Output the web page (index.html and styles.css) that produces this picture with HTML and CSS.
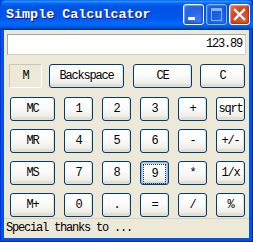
FILE: index.html
```html
<!DOCTYPE html>
<html lang="en">
<head>
    <meta charset="UTF-8">
    <title>Simple Calculcator</title>
    <link rel="stylesheet" href="styles.css">
</head>
<body>

    <div class="window">
        <div class="titlebar">
            <span class="title">Simple Calculcator</span>
            <div class="controls">
                <span class="ctrl min"><i></i></span>
                <span class="ctrl max"><i></i></span>
                <span class="ctrl close">
                    <svg width="13" height="13" viewBox="0 0 13 13"><path d="M2 2 L11 11 M11 2 L2 11" stroke="#fff" stroke-width="2.4" stroke-linecap="square"/></svg>
                </span>
            </div>
        </div>

        <div class="client">
            <div class="display">123.89</div>

            <div class="top-row">
                <span class="mem-box">M</span>
                <button class="btn backspace">Backspace</button>
                <button class="btn ce">CE</button>
                <button class="btn clear">C</button>
            </div>

            <div class="keypad">
                <button class="btn">MC</button>
                <button class="btn">1</button>
                <button class="btn">2</button>
                <button class="btn">3</button>
                <button class="btn">+</button>
                <button class="btn">sqrt</button>

                <button class="btn">MR</button>
                <button class="btn">4</button>
                <button class="btn">5</button>
                <button class="btn">6</button>
                <button class="btn">-</button>
                <button class="btn">+/-</button>

                <button class="btn">MS</button>
                <button class="btn">7</button>
                <button class="btn">8</button>
                <button class="btn focused"><span>9</span></button>
                <button class="btn">*</button>
                <button class="btn">1/x</button>

                <button class="btn">M+</button>
                <button class="btn">0</button>
                <button class="btn">.</button>
                <button class="btn">=</button>
                <button class="btn">/</button>
                <button class="btn">%</button>
            </div>
        </div>

        <div class="status">Special thanks to ...</div>
    </div>

</body>
</html>
```

FILE: styles.css
```css
body {
    margin: 0;
    width: 253px;
    height: 242px;
    overflow: hidden;
    font-family: "Liberation Mono", monospace;
}

.window {
    width: 253px;
    height: 242px;
    display: flex;
    flex-direction: column;
    background-color: #0055e5;
    box-sizing: border-box;
    border-left: 1px solid #0831d9;
    border-right: 1px solid #001ea0;
    border-bottom: 1px solid #001ea0;
}

.titlebar {
    height: 30px;
    flex-shrink: 0;
    display: flex;
    align-items: center;
    justify-content: space-between;
    padding: 0 3px 0 6px;
    background: linear-gradient(to bottom, #0058ee 0%, #3593ff 4%, #288eff 6%, #127dff 8%, #036ffc 10%, #0262ee 14%, #0057e5 20%, #0054e3 24%, #0055eb 56%, #005bf5 66%, #026afe 76%, #0062ef 86%, #0052d6 92%, #0040ab 96%, #003092 100%);
    border-radius: 7px 7px 0 0;
    margin: 0 -1px;
}

.title {
    color: white;
    font-family: "Liberation Mono", monospace;
    font-weight: bold;
    font-size: 13.4px;
    text-shadow: 1px 1px #0f1089;
    margin-top: -2px;
}

.controls {
    display: flex;
    gap: 2px;
    margin-top: -1px;
}

.ctrl {
    width: 21px;
    height: 21px;
    box-sizing: border-box;
    border: 1px solid white;
    border-radius: 3px;
    display: flex;
    align-items: center;
    justify-content: center;
    position: relative;
}

.min, .max {
    background: radial-gradient(circle at 80% 85%, #3a7cf8 0%, #2663e0 60%, #2f6de8 100%);
    box-shadow: inset -1px -1px 2px #1845c0, inset 1px 1px 1px #6fa0ff;
}

.min i {
    position: absolute;
    left: 4px;
    bottom: 4px;
    width: 7px;
    height: 3px;
    background-color: white;
}

.max {
    opacity: 0.55;
}

.max i {
    width: 9px;
    height: 9px;
    border: 1px solid white;
    border-top-width: 3px;
}

.close {
    background: radial-gradient(circle at 80% 85%, #e0603a 0%, #d4451f 55%, #e0704c 100%);
    box-shadow: inset -1px -1px 2px #a82e10, inset 1px 1px 1px #f49a7c;
}

.client {
    flex: 1;
    margin: 0 3px;
    background-color: #ece9d8;
    display: flex;
    flex-direction: column;
}

.display {
    margin: 4px 3px 0 3px;
    height: 21px;
    box-sizing: border-box;
    border: 1px solid #a5a5a5;
    border-right-color: #d4d0c8;
    border-bottom-color: #d4d0c8;
    background-color: white;
    text-align: right;
    padding-right: 3px;
    font-size: 12px;
    letter-spacing: -1.2px;
    line-height: 19px;
    color: #000;
}

.btn {
    font-family: "Liberation Mono", monospace;
    font-size: 12px;
    letter-spacing: -1.2px;
    color: #000;
    height: 24px;
    padding: 0;
    box-sizing: border-box;
    border: 1px solid #003c74;
    border-radius: 3px;
    background: linear-gradient(to bottom, #ffffff 0%, #fcfcfb 40%, #f0f0ea 80%, #d6d0c5 100%);
    box-shadow: inset -1px -1px 0 #e3e0d5;
}

.top-row {
    display: flex;
    margin-top: 9px;
    height: 24px;
}

.mem-box {
    width: 33px;
    height: 24px;
    margin-left: 5px;
    box-sizing: border-box;
    border: 1px solid #c9c6b8;
    border-right-color: #fff;
    border-bottom-color: #fff;
    font-size: 12px;
    letter-spacing: -1.2px;
    line-height: 22px;
    text-align: center;
}

.backspace {
    width: 75px;
    margin-left: 7px;
}

.ce {
    width: 59px;
    margin-left: 9px;
}

.clear {
    width: 45px;
    margin-left: 8px;
}

.keypad {
    display: grid;
    grid-template-columns: 45px repeat(5, 29px);
    grid-auto-rows: 24px;
    column-gap: 9px;
    row-gap: 8px;
    margin: 9px 0 0 6px;
}

.focused {
    border-color: #003c74;
    box-shadow: inset 0 0 0 1px #98b8ea, inset 0 0 0 2px #bcd4f6;
}

.focused span {
    display: block;
    margin: 2px;
    height: 18px;
    line-height: 18px;
    border: 1px dotted #333;
}

.status {
    height: 20px;
    flex-shrink: 0;
    margin: 0 3px 3px 3px;
    background-color: #ece9d8;
    border-top: 1px solid #d8d4c4;
    box-sizing: border-box;
    padding-left: 2px;
    font-size: 12px;
    letter-spacing: -1.2px;
    line-height: 18px;
    color: #000;
}
```
